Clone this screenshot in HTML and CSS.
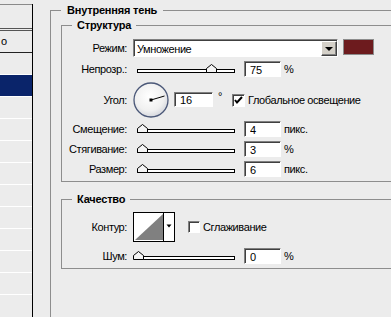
FILE: index.html
```html
<!DOCTYPE html>
<html lang="ru">
<head>
    <meta charset="UTF-8">
    <title>Стиль слоя — Внутренняя тень</title>
    <link rel="stylesheet" href="styles.css">
</head>
<body>
    <aside class="styles-list">
        <div class="list-head"></div>
        <div class="list-blend">о</div>
        <div class="list-row"></div>
        <div class="list-row is-selected"></div>
        <div class="list-row"></div>
        <div class="list-row"></div>
        <div class="list-row"></div>
        <div class="list-row"></div>
        <div class="list-row"></div>
        <div class="list-row"></div>
        <div class="list-row"></div>
        <div class="list-row"></div>
        <div class="list-row"></div>
    </aside>

    <main class="options">
        <fieldset class="group group-outer">
            <legend>Внутренняя тень</legend>

            <fieldset class="group group-inner group-structure">
                <legend>Структура</legend>

                <div class="row row-mode">
                    <span class="lbl">Режим:</span>
                    <div class="select">
                        <span class="select-text">Умножение</span>
                        <span class="select-btn"><i class="arrow"></i></span>
                    </div>
                    <span class="swatch"></span>
                </div>

                <div class="row row-opacity">
                    <span class="lbl">Непрозр.:</span>
                    <div class="slider">
                        <svg class="knob" style="left: 68px" width="11" height="9" viewBox="0 0 11 9"><polygon points="0.5,8.5 0.5,4.5 5.5,0.5 10.5,4.5 10.5,8.5" fill="#f4f4f4" stroke="#000"/></svg>
                    </div>
                    <input class="num" type="text" value="75">
                    <span class="unit">%</span>
                </div>

                <div class="row row-angle">
                    <span class="lbl">Угол:</span>
                    <svg class="dial" width="36" height="36" viewBox="0 0 36 36">
                        <defs>
                            <radialGradient id="dialFill" cx="45%" cy="40%" r="60%">
                                <stop offset="0" stop-color="#ffffff"/>
                                <stop offset="0.7" stop-color="#f0f0f0"/>
                                <stop offset="1" stop-color="#d6d8de"/>
                            </radialGradient>
                        </defs>
                        <circle cx="18" cy="18" r="17" fill="url(#dialFill)" stroke="#4b5878" stroke-width="1.3"/>
                        <line x1="18" y1="18" x2="31.5" y2="14" stroke="#000" stroke-width="1"/>
                        <rect x="16.5" y="16.5" width="3" height="3" fill="#000"/>
                    </svg>
                    <input class="num num-angle" type="text" value="16">
                    <span class="deg">°</span>
                    <span class="check is-checked">
                        <svg width="11" height="11" viewBox="0 0 11 11"><path d="M2 5 L4 7.5 L9 2" fill="none" stroke="#000" stroke-width="2"/></svg>
                    </span>
                    <span class="check-text">Глобальное освещение</span>
                </div>

                <div class="row row-slider">
                    <span class="lbl">Смещение:</span>
                    <div class="slider">
                        <svg class="knob" style="left: -1px" width="11" height="9" viewBox="0 0 11 9"><polygon points="0.5,8.5 0.5,4.5 5.5,0.5 10.5,4.5 10.5,8.5" fill="#f4f4f4" stroke="#000"/></svg>
                    </div>
                    <input class="num" type="text" value="4">
                    <span class="unit">пикс.</span>
                </div>

                <div class="row row-slider">
                    <span class="lbl">Стягивание:</span>
                    <div class="slider">
                        <svg class="knob" style="left: -1px" width="11" height="9" viewBox="0 0 11 9"><polygon points="0.5,8.5 0.5,4.5 5.5,0.5 10.5,4.5 10.5,8.5" fill="#f4f4f4" stroke="#000"/></svg>
                    </div>
                    <input class="num" type="text" value="3">
                    <span class="unit">%</span>
                </div>

                <div class="row row-slider">
                    <span class="lbl">Размер:</span>
                    <div class="slider">
                        <svg class="knob" style="left: -1px" width="11" height="9" viewBox="0 0 11 9"><polygon points="0.5,8.5 0.5,4.5 5.5,0.5 10.5,4.5 10.5,8.5" fill="#f4f4f4" stroke="#000"/></svg>
                    </div>
                    <input class="num" type="text" value="6">
                    <span class="unit">пикс.</span>
                </div>
            </fieldset>

            <fieldset class="group group-inner group-quality">
                <legend>Качество</legend>

                <div class="row row-contour">
                    <span class="lbl">Контур:</span>
                    <svg class="contour" width="42" height="30" viewBox="0 0 42 30">
                        <rect x="0.5" y="0.5" width="41" height="29" fill="#fff" stroke="#000"/>
                        <polygon points="2,28 30,2 30,28" fill="#808080"/>
                        <line x1="30.5" y1="0" x2="30.5" y2="30" stroke="#000"/>
                        <polygon points="33.5,12.5 38.5,12.5 36,15.5" fill="#000"/>
                    </svg>
                    <span class="check"></span>
                    <span class="check-text">Сглаживание</span>
                </div>

                <div class="row row-slider row-noise">
                    <span class="lbl">Шум:</span>
                    <div class="slider">
                        <svg class="knob" style="left: -5px" width="11" height="9" viewBox="0 0 11 9"><polygon points="0.5,8.5 0.5,4.5 5.5,0.5 10.5,4.5 10.5,8.5" fill="#f4f4f4" stroke="#000"/></svg>
                    </div>
                    <input class="num" type="text" value="0">
                    <span class="unit">%</span>
                </div>
            </fieldset>
        </fieldset>
    </main>
</body>
</html>
```

FILE: styles.css
```css
* {
    margin: 0;
    padding: 0;
    box-sizing: border-box;
    font-family: "Liberation Sans", Arial, sans-serif;
}

body {
    background: #ececec;
    color: #000;
    font-size: 11px;
    letter-spacing: -0.4px;
    display: flex;
    height: 317px;
    overflow: hidden;
}

/* left list of styles, clipped by the window */
.styles-list {
    width: 33px;
    flex: none;
    margin-top: 4px;
    border-right: 1px solid #000;
}

.list-head {
    height: 24px;
    border-top: 1px solid #8a8a8a;
}

.list-blend {
    height: 25px;
    border-top: 3px double #555;
    border-bottom: 1px solid #222;
    line-height: 21px;
    padding-left: 1px;
    font-size: 11px;
}

.list-row {
    height: 22px;
    border-bottom: 1px solid #fff;
}

.list-row.is-selected {
    background: #0a246a;
}

/* options panel */
.options {
    flex: none;
    width: 420px;
    padding-left: 17px;
}

.group {
    border: 1px solid #8d8d8d;
    min-width: 0;
}

.group legend {
    font-weight: bold;
    line-height: 13px;
    font-size: 11px;
    letter-spacing: -0.2px;
}

.group-outer {
    margin-top: 4px;
    padding: 2px 0 60px 10px;
}

.group-outer > legend {
    padding: 0 6px;
}

.group-inner {
    border-right: none;
}

.group-inner > legend {
    margin-left: 10px;
    padding: 0 5px;
}

.group-structure {
    padding: 7px 0 4px;
}

.group-quality {
    margin-top: 11px;
    padding: 6px 0 4px;
}

.row {
    display: flex;
    align-items: center;
}

.lbl {
    width: 65px;
    margin-right: 6px;
    text-align: right;
    white-space: nowrap;
}

.row-mode {
    height: 18px;
    align-items: flex-start;
}

.row-mode .lbl {
    line-height: 18px;
}

.row-opacity {
    margin-top: 4px;
    height: 16px;
}

.row-angle {
    margin-top: 5px;
    height: 35px;
}

.row-slider {
    margin-top: 4px;
    height: 16px;
}

.row-contour {
    height: 30px;
}

.row-noise {
    margin-top: 6px;
}

/* sunken controls */
.select,
.num,
.check {
    background: #fff;
    border: 1px solid;
    border-color: #808080 #fff #fff #808080;
    box-shadow: inset 1px 1px 0 #404040;
}

.select {
    width: 205px;
    height: 18px;
    display: flex;
    align-items: center;
}

.select-text {
    flex: 1;
    padding-left: 3px;
    padding-top: 1px;
}

.select-btn {
    width: 16px;
    height: 15px;
    margin-top: 1px;
    background: #d4d0c8;
    border: 1px solid;
    border-color: #fff #404040 #404040 #fff;
    box-shadow: inset -1px -1px 0 #808080;
    display: flex;
    align-items: center;
    justify-content: center;
}

.arrow {
    width: 0;
    height: 0;
    border-left: 4px solid transparent;
    border-right: 4px solid transparent;
    border-top: 4px solid #000;
    margin-top: 1px;
}

.swatch {
    width: 31px;
    height: 16px;
    margin-left: 5px;
    background: #6d1b1e;
    border: 1px solid #8c8c8c;
}

.num {
    width: 37px;
    height: 16px;
    padding: 1px 0 0 5px;
    font-size: 11px;
    color: #000;
    outline: none;
}

.unit {
    margin-left: 3px;
}

.slider {
    position: relative;
    width: 98px;
    height: 4px;
    margin: 4px 9px 0 4px;
    background: #fff;
    border: 1px solid #000;
}

.row-opacity .slider {
    margin-top: 3px;
}

.knob {
    position: absolute;
    bottom: -1px;
    display: block;
}

.dial {
    display: block;
    width: 36px;
    height: 36px;
    align-self: flex-start;
}

.num-angle {
    width: 39px;
    height: 15px;
    margin-left: 5px;
    align-self: flex-start;
    margin-top: 10px;
}

.deg {
    margin-left: 5px;
    align-self: flex-start;
    margin-top: 8px;
}

.check {
    width: 13px;
    height: 13px;
    display: flex;
    align-items: center;
    justify-content: center;
}

.row-angle .check {
    margin-left: 10px;
    align-self: flex-start;
    margin-top: 12px;
}

.row-angle .check-text {
    align-self: flex-start;
    margin-top: 12px;
}

.check-text {
    margin-left: 3px;
}

.contour {
    display: block;
}

.row-contour .check {
    margin-left: 13px;
    width: 12px;
    height: 12px;
}
```
